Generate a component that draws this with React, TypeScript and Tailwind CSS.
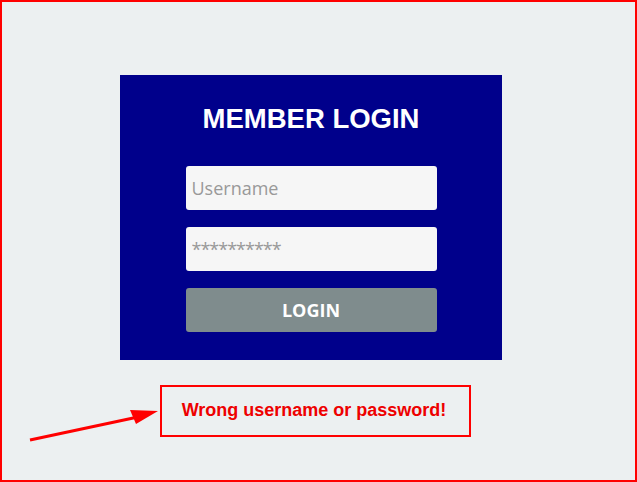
export default function App() {
  return (
    <div className="relative w-[637px] h-[482px] border-2 border-[#ff0000] bg-[#ecf0f1] flex flex-col overflow-hidden">
      {/* login card */}
      <div className="ml-[118px] mt-[73px] w-[382px] h-[285px] bg-[#00008b] flex flex-col items-center">
        <h1 className="mt-[29px] text-[27.5px] leading-[30px] font-bold text-white font-['Liberation_Sans',Arial,sans-serif]">
          MEMBER LOGIN
        </h1>
        <div className="mt-[32px] w-[251px] flex flex-col gap-[17px] font-['Open_Sans',sans-serif]">
          <input
            type="text"
            placeholder="Username"
            className="h-[44px] w-full rounded-[3px] bg-[#f6f6f6] px-[6px] text-[18px] text-gray-700 placeholder:text-[#999] outline-none"
          />
          <input
            type="text"
            placeholder="**********"
            className="h-[44px] w-full rounded-[3px] bg-[#f6f6f6] px-[6px] text-[18px] tracking-[-1px] text-gray-700 placeholder:text-[#999] outline-none"
          />
          <button className="h-[44px] w-full rounded-[3px] bg-[#7f8c8d] text-[18px] font-bold text-white">
            LOGIN
          </button>
        </div>
      </div>

      {/* error message */}
      <div className="ml-[158px] mt-[25px] w-[311px] h-[52px] border-2 border-[#ff0000] flex items-center justify-center">
        <span className="text-[18px] font-bold text-[#ee0000] font-['Liberation_Sans',Arial,sans-serif] -mt-[2px] -ml-[3px]">
          Wrong username or password!
        </span>
      </div>

      {/* annotation arrow */}
      <svg className="absolute left-0 top-0 pointer-events-none" width="637" height="482">
        <line x1="28" y1="438" x2="136" y2="415" stroke="#ff0000" strokeWidth="3" />
        <polygon points="156,409 128,408 134,422" fill="#ff0000" />
      </svg>
    </div>
  );
}
